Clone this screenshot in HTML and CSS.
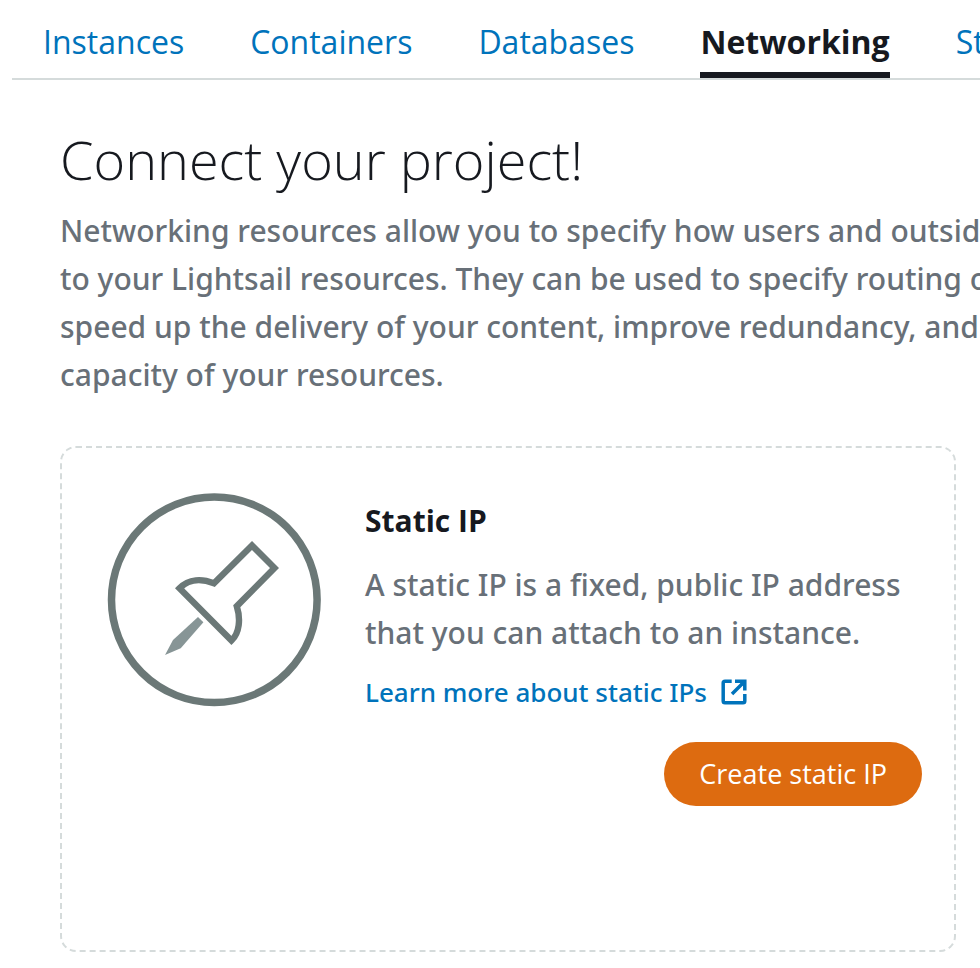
FILE: index.html
```html
<!DOCTYPE html>
<html lang="en">
<head>
<meta charset="utf-8">
<meta name="viewport" content="width=device-width, initial-scale=1">
<title>Networking</title>
<link rel="stylesheet" href="styles.css">
</head>
<body>
<nav class="tabs" aria-label="Resources">
  <a class="tab" href="#instances">Instances</a>
  <a class="tab" href="#containers">Containers</a>
  <a class="tab" href="#databases">Databases</a>
  <a class="tab tab-active" href="#networking" aria-current="page">Networking</a>
  <a class="tab" href="#storage">Storage</a>
</nav>
<main class="content">
  <h1 class="title">Connect your project!</h1>
  <p class="intro">Networking resources allow you to specify how users and outside<br>
    to your Lightsail resources. They can be used to specify routing o<br>
    speed up the delivery of your content, improve redundancy, and<br>
    capacity of your resources.</p>
  <section class="card" aria-labelledby="static-ip">
    <svg class="pin" viewBox="12 13 214 214" fill="none" aria-hidden="true">
      <circle cx="119.3" cy="119.8" r="102.8" stroke="#6b7877" stroke-width="7.5"/>
      <path d="M157 65.5 179.5 88 141.8 126.2C145.8 139 144.5 153 136.500 160.500L84.500 108.200C94 98.500 107 98.500 119 103.300Z" stroke="#6b7877" stroke-width="6.400"/>
      <path d="M103 137 108.400 142.300 85.700 168.300 70 175 78 160Z" fill="#879596"/>
    </svg>
    <div class="details">
      <h2 class="name" id="static-ip">Static IP</h2>
      <p class="summary">A static IP is a fixed, public IP address that you can attach to an instance.</p>
      <a class="learn" href="#learn">Learn more about static IPs
        <svg class="external" viewBox="0 0 26 26" fill="none" stroke="currentColor" stroke-width="3.5" aria-hidden="true">
          <path d="M10.700 2.200H4Q2.200 2.200 2.200 4V22Q2.200 23.800 4 23.800H22Q23.800 23.800 23.800 22V15"/>
          <path d="M14 2.200H23.800V11.500M23.500 2.500 11 15"/>
          <path d="M17 2H24V9Z" fill="currentColor" stroke="none"/>
        </svg>
      </a>
      <button class="create" type="button">Create static IP</button>
    </div>
  </section>
</main>
</body>
</html>
```
FILE: styles.css
```css
* {
  box-sizing: border-box;
}

body {
  margin: 0;
  overflow-x: hidden;
  background: #fff;
  color: #16191f;
  font-family: "Open Sans", "Noto Sans", sans-serif;
}

h1,
h2,
p {
  margin: 0;
}

a {
  color: #0073bb;
  text-decoration: none;
}

.tabs {
  display: flex;
  gap: 66px;
  margin-left: 12px;
  padding: 12px 0 0 31px;
  border-bottom: 2px solid #d5dbdb;
  overflow: hidden;
  white-space: nowrap;
}

.tab {
  flex: none;
  font-size: 32px;
  line-height: 60px;
  border-bottom: 6px solid transparent;
}

.tab-active {
  color: #16191f;
  font-weight: 700;
  border-bottom-color: #16191f;
}

.content {
  padding: 48px 24px 16px 60px;
}

.title {
  font-size: 54px;
  font-weight: 300;
  line-height: 62px;
}

.intro {
  margin-top: 17px;
  white-space: nowrap;
}

.intro,
.summary {
  color: #687078;
  font-family: "Noto Sans", "Open Sans", sans-serif;
  font-size: 30px;
  font-weight: 500;
  line-height: 48px;
}

.card {
  display: flex;
  align-items: flex-start;
  gap: 44px;
  min-height: 506px;
  margin-top: 47px;
  padding: 45px 32px 45px 45px;
  border: 2px dashed #d5dbdb;
  border-radius: 16px;
}

.pin {
  flex: none;
  width: 214px;
}

.details {
  display: flex;
  flex: 1;
  flex-direction: column;
  align-items: flex-start;
}

.name {
  margin-top: 4px;
  font-size: 30px;
  font-weight: 700;
  line-height: 48px;
}

.summary {
  margin-top: 16px;
}

.learn {
  display: flex;
  align-items: center;
  gap: 14px;
  margin-top: 15px;
  font-family: "Noto Sans", "Open Sans", sans-serif;
  font-size: 26px;
  font-weight: 500;
  line-height: 40px;
}

.external {
  width: 26px;
}

.create {
  align-self: flex-end;
  margin-top: 30px;
  padding: 12px 35px;
  border: 0;
  border-radius: 32px;
  background: #dd6b10;
  color: #fff;
  font-family: inherit;
  font-size: 27px;
  line-height: 40px;
}
```
